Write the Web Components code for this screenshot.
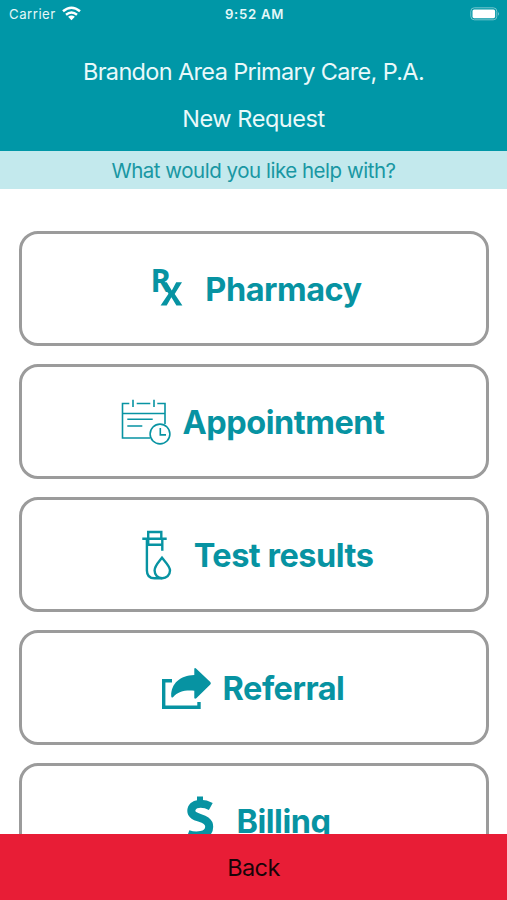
<!DOCTYPE html>
<html lang="en"><head><meta charset="utf-8"><title>New Request</title>
<style>html,body{margin:0;height:100%;overflow:hidden;background:#fff}body{font-family:Inter,"Liberation Sans",sans-serif}</style></head>
<body><request-screen></request-screen>
<script>
const define=(name,html)=>customElements.define(name,class extends HTMLElement{
  constructor(){super();this.attachShadow({mode:'open'}).innerHTML=html;}
});
const icons={
 pharmacy:`<g stroke="none" fill="currentColor"><text x="7.4" y="28" font-family="Open Sans,sans-serif" font-weight="700" font-size="32.5" textLength="20" lengthAdjust="spacingAndGlyphs">R</text></g><path fill="currentColor" stroke="none" d="M18 18.2H23.8L28.8 26.4L33.2 18.2H39L31.7 29.9L39.4 41.6H33.4L28.4 33.2L23.7 41.6H17.6L25.5 29.7Z"/>`,
 appointment:`<g stroke-width="1.6"><path d="M8.3 6.5H1.5V41H29M15.7 6.5H29.3M36.3 6.5H44V27M1.5 16.5H44M12 2.8V10M33 2.8V10M6.3 22.3H31.7M6.3 29H21.3"/><circle cx="39" cy="37" r="9.9"/><path d="M39.3 31V37.9H45"/></g>`,
 test:`<g stroke-width="2.4"><path d="M16.2 15.8V2H29.3V8.8M10.3 8.8H34.7M16.2 14.7H30.3M14.9 8.8V40.5Q14.9 48.3 22.5 48.3H30M30.3 8.8V20.8"/><path d="M30 27.8C26.8 32 22.6 35.9 22.6 40.6C22.6 45.2 26 48.3 30.2 48.3S38 45.2 38 40.6C38 35.9 33.2 32 30 27.8Z"/></g>`,
 referral:`<path d="M11 17.8H2.7V44.2H38V39" stroke-width="3.4"/><path fill="currentColor" stroke="none" d="M33.3 5.6Q34 4.6 35.3 5.7L49.3 19Q50.5 20.2 49.3 21.4L35.3 35.3Q33.9 36.3 33.3 35V27.8C24 27 17 28.5 12 34.3Q10.3 35.3 10.2 33C10.2 20.5 19 12.5 33.3 12.1Z"/>`,
 billing:`<path d="M35.8 10.5C29 6.8 16.3 5.8 16.3 15C16.3 23.5 34.2 20 34.2 30.8C34.2 40.5 20 40.5 13 38" stroke-width="8"/><path d="M22 .6H28V8H22ZM22 40H28V47H22Z" fill="currentColor" stroke="none"/>`
};
define('status-bar',`<style>:host{display:grid;grid-template-columns:1fr auto 1fr;align-items:center;height:27px;color:#e5f7f8;font-size:13.2px;padding:0 7px 0 9px}
.l{display:flex;align-items:center;gap:6px;letter-spacing:.5px}.t{font-weight:600;letter-spacing:.7px}.b{justify-self:end}svg{display:block}</style>
<div class="l"><span>Carrier</span><svg width="19" height="15" viewBox="0 0 19 15" fill="none" stroke="#fff" stroke-width="2.5"><path d="M1 5.3Q9.5-1.8 18 5.3M4 8.7Q9.5 4.2 15 8.7"/><path d="M6.1 10.7Q9.5 8.1 12.9 10.7L9.5 14.2Z" fill="#fff" stroke="none"/></svg></div>
<span class="t">9:52 AM</span>
<svg class="b" width="30" height="14" viewBox="0 0 30 14"><rect x=".8" y=".8" width="26" height="12" rx="3.5" fill="none" stroke="#74c5cd"/><rect x="2.5" y="2.4" width="22.6" height="8.8" rx="1.6" fill="#fff"/><path d="M28 5Q30 6.9 28 8.8Z" fill="#74c5cd"/></svg>`);
define('page-header',`<style>:host{display:block;height:151px;background:#0097a7;color:#e9f9fa;text-align:center;font-size:23.5px}
.row{height:48px;line-height:48px;white-space:nowrap}.first{margin-top:21px}.first span{letter-spacing:-.65px}.second{height:46px;line-height:46px}.second span{letter-spacing:-.45px}</style>
<status-bar></status-bar><div class="row first"><span><slot name="practice"></slot></span></div><div class="row second"><span><slot name="title"></slot></span></div>`);
define('prompt-strip',`<style>:host{display:block;height:38px;line-height:39px;background:#c3e9ed;color:#1997a3;text-align:center;font-size:20.5px;letter-spacing:-.48px}</style><slot></slot>`);
customElements.define('request-option',class extends HTMLElement{
  connectedCallback(){this.attachShadow({mode:'open'}).innerHTML=`<style>:host{box-sizing:border-box;display:flex;flex:none;align-items:center;justify-content:center;gap:12px;height:115px;padding-right:3px;border:3px solid #9b9b9b;border-radius:19px;color:#0793a2;font-size:32.5px;font-weight:700;letter-spacing:-.5px;white-space:nowrap}svg{width:50px;height:50px;flex:none;overflow:visible}span{padding-top:2px}</style><svg viewBox="0 0 50 50" fill="none" stroke="currentColor" stroke-width="2">${icons[this.getAttribute('icon')]}</svg><span><slot></slot></span>`;}
});
define('option-list',`<style>:host{display:flex;flex-direction:column;gap:18px;flex:1;min-height:0;overflow:hidden;padding:42px 18px 0 19px}</style><slot></slot>`);
define('back-button',`<style>:host{display:block;height:66px;line-height:67px;background:#e81d36;color:#180408;text-align:center;font-size:23.5px;letter-spacing:-.6px}</style><slot></slot>`);
define('request-screen',`<style>:host{display:flex;flex-direction:column;height:900px;width:507px;background:#fff}</style>
<page-header><span slot="practice">Brandon Area Primary Care, P.A.</span><span slot="title">New Request</span></page-header>
<prompt-strip>What would you like help with?</prompt-strip>
<option-list>
<request-option icon="pharmacy">Pharmacy</request-option>
<request-option icon="appointment">Appointment</request-option>
<request-option icon="test">Test results</request-option>
<request-option icon="referral">Referral</request-option>
<request-option icon="billing">Billing</request-option>
</option-list><back-button>Back</back-button>`);
</script></body></html>
